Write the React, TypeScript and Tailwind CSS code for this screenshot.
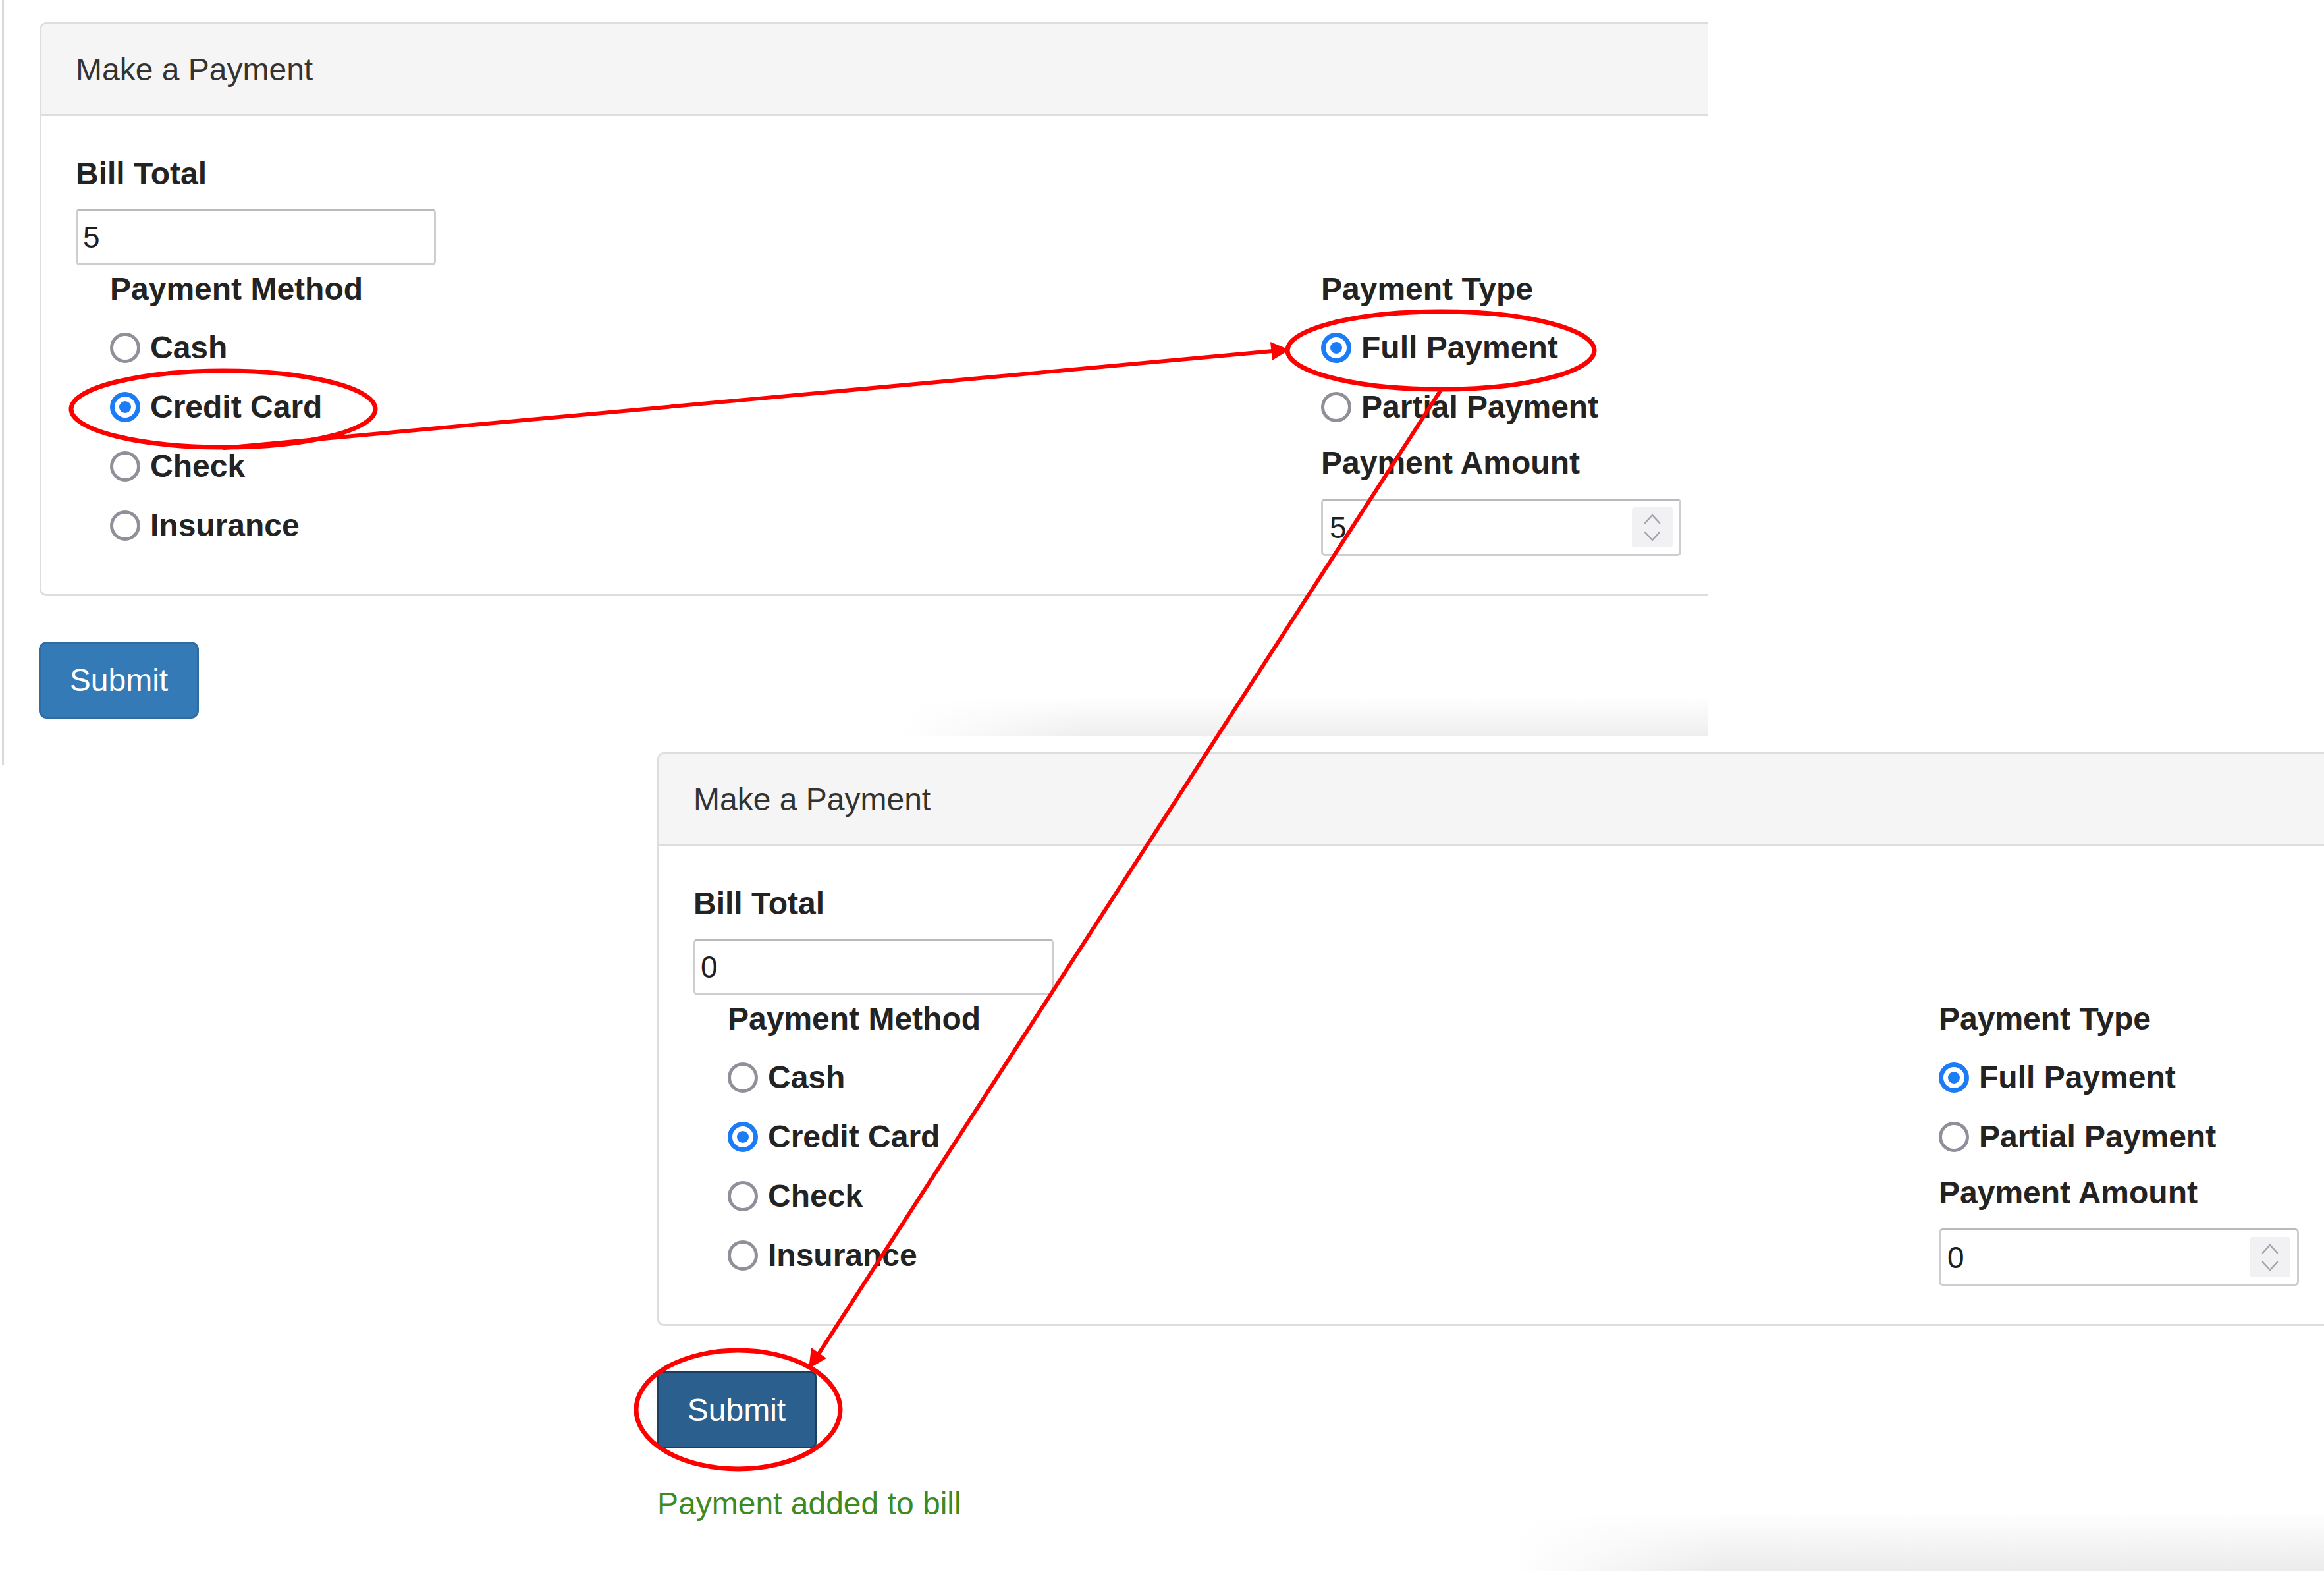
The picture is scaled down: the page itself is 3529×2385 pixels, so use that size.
import React from "react";

function Radio({ checked }: { checked?: boolean }) {
  if (checked) {
    return (
      <span className="flex h-[46px] w-[46px] shrink-0 items-center justify-center rounded-full border-[7px] border-[#1b7cf6] bg-white">
        <span className="h-[18px] w-[18px] rounded-full bg-[#1b7cf6]" />
      </span>
    );
  }
  return <span className="h-[46px] w-[46px] shrink-0 rounded-full border-[5px] border-[#90909a] bg-white" />;
}

function RadioRow({ label, checked }: { label: string; checked?: boolean }) {
  return (
    <div className="flex h-[90px] items-center gap-[15px]">
      <Radio checked={checked} />
      <span className="text-[48px] font-bold leading-[68px] text-[#232323]">{label}</span>
    </div>
  );
}

function Label({ children }: { children: React.ReactNode }) {
  return <div className="text-[48px] font-bold leading-[68px] text-[#232323]">{children}</div>;
}

function TextBox({ value }: { value: string }) {
  return (
    <div className="flex h-[86px] w-[547px] items-center rounded-[6px] border-[3px] border-[#cdcdd2] border-t-[#b9b9bf] bg-white pl-[8px] text-[46px] leading-none text-[#1f1f1f]">
      {value}
    </div>
  );
}

function NumberBox({ value }: { value: string }) {
  return (
    <div className="flex h-[87px] w-[547px] items-center justify-between rounded-[6px] border-[3px] border-[#cdcdd2] border-t-[#b9b9bf] bg-white pl-[10px] pr-[10px] text-[46px] leading-none text-[#1f1f1f]">
      <span>{value}</span>
      <span className="flex h-[61px] w-[62px] items-center justify-center rounded-[4px] bg-[#f1f1f3]">
        <svg width="26" height="42" viewBox="0 0 26 42" fill="none" stroke="#a2a2aa" strokeWidth="2.5" strokeLinecap="round" strokeLinejoin="round">
          <polyline points="2,14 13,2 24,14" />
          <polyline points="2,28 13,40 24,28" />
        </svg>
      </span>
    </div>
  );
}

function Panel({ bill, amount }: { bill: string; amount: string }) {
  return (
    <div className="w-[2800px] rounded-[10px] border-[3px] border-[#dddddd] bg-white">
      <div className="rounded-t-[7px] border-b-[3px] border-[#dddddd] bg-[#f5f5f5] px-[52px] pb-[33px] pt-[35px] text-[48px] leading-[68px] text-[#333333]">
        Make a Payment
      </div>
      <div className="pb-[58px] pl-[52px] pt-[54px]">
        <Label>Bill Total</Label>
        <div className="mt-[19px]">
          <TextBox value={bill} />
        </div>
        <div className="mt-[2px] flex">
          <div className="w-[1891px] shrink-0 pl-[52px]">
            <Label>Payment Method</Label>
            <div className="mt-[10px] flex flex-col">
              <RadioRow label="Cash" />
              <RadioRow label="Credit Card" checked />
              <RadioRow label="Check" />
              <RadioRow label="Insurance" />
            </div>
          </div>
          <div className="flex flex-col">
            <Label>Payment Type</Label>
            <div className="mt-[10px] flex flex-col">
              <RadioRow label="Full Payment" checked />
              <RadioRow label="Partial Payment" />
            </div>
            <div className="mt-[6px]">
              <Label>Payment Amount</Label>
            </div>
            <div className="mt-[20px]">
              <NumberBox value={amount} />
            </div>
          </div>
        </div>
      </div>
    </div>
  );
}

export default function App() {
  return (
    <div className="relative h-[2385px] w-[3529px] overflow-hidden bg-white [font-family:'Liberation_Sans',Arial,Helvetica,sans-serif]">
      {/* First screenshot */}
      <div className="ml-[3px] h-[1162px] w-[2590px] overflow-hidden border-l-[3px] border-[#d9d9d9]">
        <div className="ml-[54px] mt-[34px]">
          <Panel bill="5" amount="5" />
        </div>
        <div className="ml-[53px] mt-[69px] flex items-start">
          <div className="flex h-[117px] w-[243px] shrink-0 items-center justify-center rounded-[12px] border-[3px] border-[#2e6da4] bg-[#337ab7] text-[48px] leading-none text-white">
            Submit
          </div>
          <div className="ml-auto mt-[84px] h-[60px] w-[1226px] bg-[linear-gradient(to_bottom,rgba(255,255,255,0),#eeeeee)] [mask-image:linear-gradient(to_right,transparent,#000_280px)]" />
        </div>
      </div>

      {/* Second screenshot */}
      <div className="-mt-[20px] ml-[998px] w-[2531px]">
        <Panel bill="0" amount="0" />
        <div className="-ml-[1px] mt-[69px] flex h-[117px] w-[243px] items-center justify-center rounded-[8px] border-[3px] border-[#1c3f61] bg-[#2a5f8e] text-[48px] leading-none text-white">
          Submit
        </div>
        <div className="flex items-start">
          <div className="mt-[50px] text-[48px] leading-[68px] text-[#3b8a22]">Payment added to bill</div>
          <div className="ml-auto mt-[96px] h-[92px] w-[1234px] bg-[linear-gradient(to_bottom,rgba(255,255,255,0),#ebebeb)] [mask-image:linear-gradient(to_right,transparent,#000_320px)]" />
        </div>
      </div>

      {/* Red annotations */}
      <svg
        className="pointer-events-none absolute left-0 top-0"
        width="3529"
        height="2385"
        viewBox="0 0 3529 2385"
      >
        <g fill="none" stroke="#ff0000" strokeWidth="7">
          <ellipse cx="339" cy="621" rx="231" ry="58" />
          <ellipse cx="2188" cy="532" rx="233" ry="59" />
          <ellipse cx="1121" cy="2140" rx="155" ry="90" />
        </g>
        <g stroke="#ff0000" strokeWidth="6" strokeLinecap="round">
          <line x1="340" y1="680" x2="1932" y2="533" />
          <line x1="2188" y1="592" x2="1244" y2="2054" />
        </g>
        <polygon fill="#ff0000" points="1958,531 1932,547 1929,519" />
        <polygon fill="#ff0000" points="1228,2078 1255,2062 1232,2046" />
      </svg>
    </div>
  );
}
